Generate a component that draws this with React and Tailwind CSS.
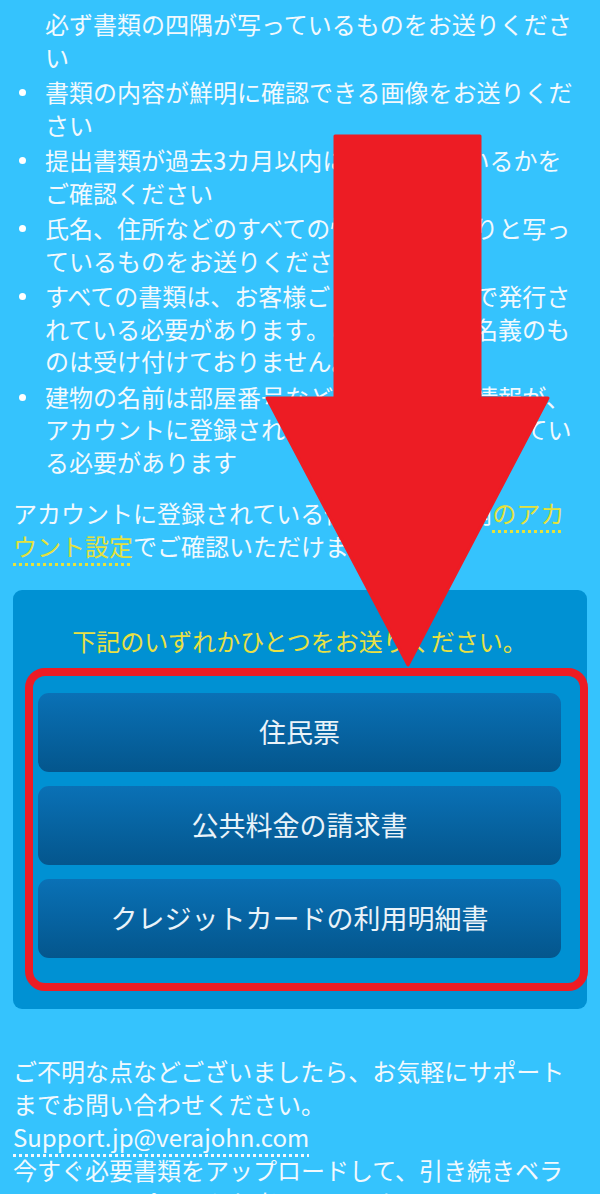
import React from 'react';

const items = [
  { bullet: false, text: '必ず書類の四隅が写っているものをお送りください' },
  { bullet: true, text: '書類の内容が鮮明に確認できる画像をお送りください' },
  { bullet: true, text: '提出書類が過去3カ月以内に発行されているかをご確認ください' },
  { bullet: true, text: '氏名、住所などのすべての情報がはっきりと写っているものをお送りください' },
  {
    bullet: true,
    text: 'すべての書類は、お客様ご自身のお名前で発行されている必要があります。ご家族などの名義のものは受け付けておりません。',
  },
  {
    bullet: true,
    text: '建物の名前は部屋番号などすべての住所情報が、アカウントに登録されている通りに記載されている必要があります',
  },
];

const documents = ['住民票', '公共料金の請求書', 'クレジットカードの利用明細書'];

export default function App() {
  return (
    <div
      className="relative h-[1194px] overflow-hidden bg-[#35c3fd] pl-[13px] pr-[20px] pt-[8px] text-[24px] leading-[32.5px] text-[#f2f9fd]"
      style={{ fontFamily: '"Noto Sans CJK JP", "Noto Sans", sans-serif' }}
    >
      <ul className="flex flex-col gap-[3px]">
        {items.map((item, i) => (
          <li key={i} className="flex">
            <span className="flex w-[32px] shrink-0 pt-[13px] pl-[6px]">
              {item.bullet && <span className="block h-[7px] w-[7px] rounded-full bg-white" />}
            </span>
            <span className="flex-1">{item.text}</span>
          </li>
        ))}
      </ul>

      <p className="mt-[19px]">
        アカウントに登録されている住所はサイト内
        <a className="text-[#e4e13c] underline decoration-dotted decoration-[3px] underline-offset-[7px]">
          のアカウント設定
        </a>
        でご確認いただけます。
      </p>

      <div className="relative mt-[28px] mr-[-7px] rounded-[9px] bg-[#0091d3] pl-[25px] pr-[26px] pt-[34px] pb-[51px]">
        <p className="text-center text-[24px] leading-[33px] text-[#e9e043]">下記のいずれかひとつをお送りください。</p>
        <div className="mt-[36px] flex flex-col gap-[14px]">
          {documents.map((doc) => (
            <button
              key={doc}
              className="flex h-[79px] items-center justify-center rounded-[11px] bg-gradient-to-b from-[#0a71b6] to-[#04568d] text-[27px] text-[#eaf3f9]"
            >
              {doc}
            </button>
          ))}
        </div>
        <div className="pointer-events-none absolute top-[78px] left-[12px] h-[323px] w-[563px] rounded-[20px] border-[8px] border-[#ed1c24]" />
      </div>

      <div className="mt-[45px] leading-[33px]">
        <p>ご不明な点などございましたら、お気軽にサポートまでお問い合わせください。</p>
        <a className="underline decoration-dotted decoration-[3px] underline-offset-[7px]">
          Support.jp@verajohn.com
        </a>
        <p>今すぐ必要書類をアップロードして、引き続きベラジョンでのプレイをお楽しみください。</p>
      </div>

      <svg
        className="pointer-events-none absolute top-0 left-0"
        width="600"
        height="1194"
        viewBox="0 0 600 1194"
      >
        <polygon
          points="335,136 480,136 480,398 548,398 408,665 267,398 335,398"
          fill="#ed1c24"
          stroke="#ed1c24"
          strokeWidth="3"
          strokeLinejoin="round"
        />
      </svg>
    </div>
  );
}
